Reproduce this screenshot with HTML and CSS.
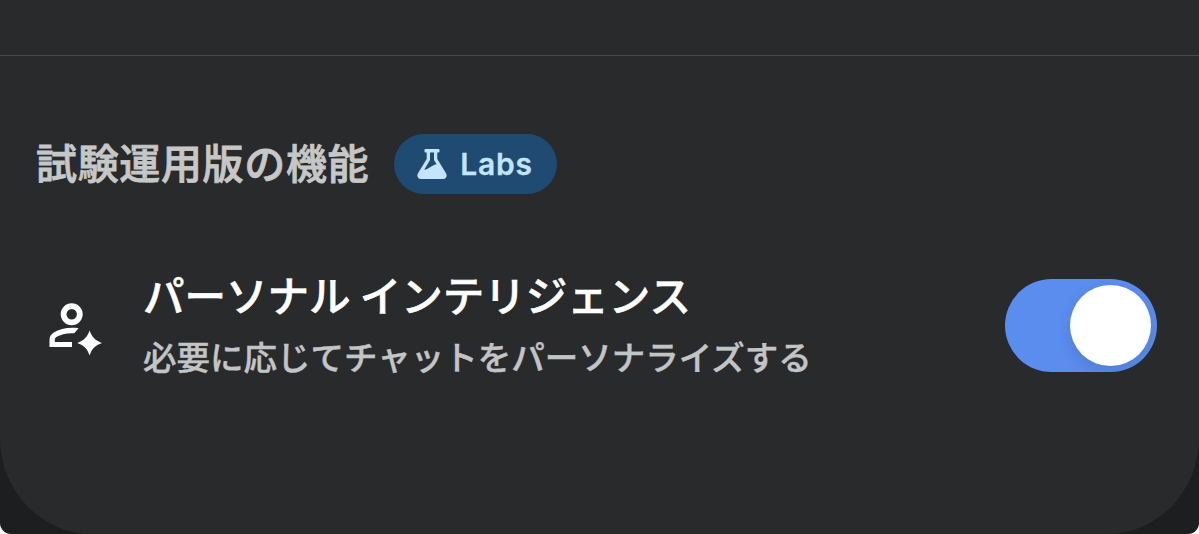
FILE: index.html
```html
<!DOCTYPE html>
<html lang="ja">
<head>
  <meta charset="UTF-8" />
  <meta name="viewport" content="width=device-width, initial-scale=1.0" />
  <title>試験運用版の機能</title>
  <link rel="stylesheet" href="styles.css">
</head>
<body>
  <div class="screen">
    <main class="sheet">
      <div class="previous-section"></div>

      <section class="labs-section">
        <div class="section-header">
          <h2>試験運用版の機能</h2>
          <span class="badge">
            <svg class="flask" viewBox="0 0 30 30" aria-hidden="true">
              <path fill="currentColor" fill-rule="evenodd" d="M8.5 0H21.5Q22.5 0 22.5 1V2.4Q22.5 3.4 21.5 3.4H20.3V10L29 24.2C30.6 27 29.2 30 26 30H4C.8 30-.6 27 1 24.2L9.7 10V3.4H8.5Q7.5 3.4 7.5 2.4V1Q7.5 0 8.5 0ZM13 3.4V11L7.2 20.7C11.5 20.8 13.5 16.5 19.6 15.2L17 11V3.4Z"/>
            </svg>
            <span>Labs</span>
          </span>
        </div>

        <div class="setting">
          <svg class="person" viewBox="0 0 54 54" aria-hidden="true">
            <circle cx="22.7" cy="12.2" r="8.1" fill="none" stroke="currentColor" stroke-width="5.8"/>
            <path fill="currentColor" d="M.5 45V38C.5 34.5 2 32.3 4.8 30.5C11 26.7 19.5 25 29.6 26.2L25.2 31.3C17.5 30.8 11.8 32.5 7.8 34.8C6.2 35.7 5.8 36.8 5.8 38V40H23V45Z"/>
            <path fill="currentColor" d="M40.6 28.6C43.2 35.6 46 38.4 53 41C46 43.6 43.2 46.4 40.6 53.4C38 46.4 35.2 43.6 28.2 41C35.2 38.4 38 35.6 40.6 28.6Z"/>
          </svg>
          <div class="setting-text">
            <h3>パーソナル インテリジェンス</h3>
            <p>必要に応じてチャットをパーソナライズする</p>
          </div>
          <button class="toggle" type="button" role="switch" aria-checked="true" aria-label="パーソナル インテリジェンス">
            <span class="knob"></span>
          </button>
        </div>
      </section>
    </main>
  </div>
</body>
</html>
```

FILE: styles.css
```css
* {
  box-sizing: border-box;
}

body {
  margin: 0;
  background-color: #fff;
  font-family: "Noto Sans CJK JP", sans-serif;
  overflow: hidden;
}

.screen {
  height: 534px;
  background-color: #1d1e1f;
  border-radius: 0 0 11px 11px;
  overflow: hidden;
}

.sheet {
  height: 534px;
  background-color: #292a2c;
  border-radius: 0 0 92px 92px / 0 0 96px 96px;
}

.previous-section {
  height: 56px;
  border-bottom: 1px solid #4a4b4d;
}

.labs-section {
  padding: 78px 42px 0 36px;
}

.section-header {
  display: flex;
  align-items: center;
  gap: 25px;
  height: 60px;
}

h2, h3, p {
  margin: 0;
  white-space: nowrap;
}

h2 {
  font-size: 41px;
  font-weight: 500;
  letter-spacing: 0.65px;
  line-height: 60px;
  padding-bottom: 7px;
  color: #c6c7c7;
  -webkit-text-stroke: 0.8px #c6c7c7;
}

.badge {
  display: flex;
  align-items: center;
  gap: 13px;
  width: 163px;
  height: 60px;
  padding-left: 23px;
  border-radius: 30px;
  background-color: #1f4a72;
  color: #c2e4ff;
  font-family: Inter, sans-serif;
  font-size: 30px;
  font-weight: 600;
  letter-spacing: 0.8px;
  -webkit-text-stroke: 0.3px #c2e4ff;
}

.flask {
  width: 30px;
  height: 30px;
}

.setting {
  display: flex;
  align-items: center;
  height: 112px;
  margin-top: 75px;
}

.person {
  width: 54px;
  height: 54px;
  margin: 8px 0 0 13px;
  color: #fff;
}

.setting-text {
  flex: 1;
  margin-left: 40px;
  padding-bottom: 5px;
}

h3 {
  font-size: 41.5px;
  font-weight: 500;
  line-height: 60px;
  color: #fff;
  -webkit-text-stroke: 0.6px #fff;
}

p {
  font-size: 33.5px;
  font-weight: 500;
  line-height: 50px;
  margin-top: 7px;
  color: #c3c4c5;
  -webkit-text-stroke: 0.4px #c3c4c5;
}

.toggle {
  display: flex;
  align-items: center;
  justify-content: flex-end;
  width: 152px;
  height: 93px;
  padding: 0 6px;
  border: none;
  border-radius: 47px;
  background-color: #5b8def;
  overflow: hidden;
}

.knob {
  width: 81px;
  height: 81px;
  border-radius: 50%;
  background-color: #fff;
  box-shadow: 0 6px 16px rgba(0, 0, 0, 0.12);
}
```
